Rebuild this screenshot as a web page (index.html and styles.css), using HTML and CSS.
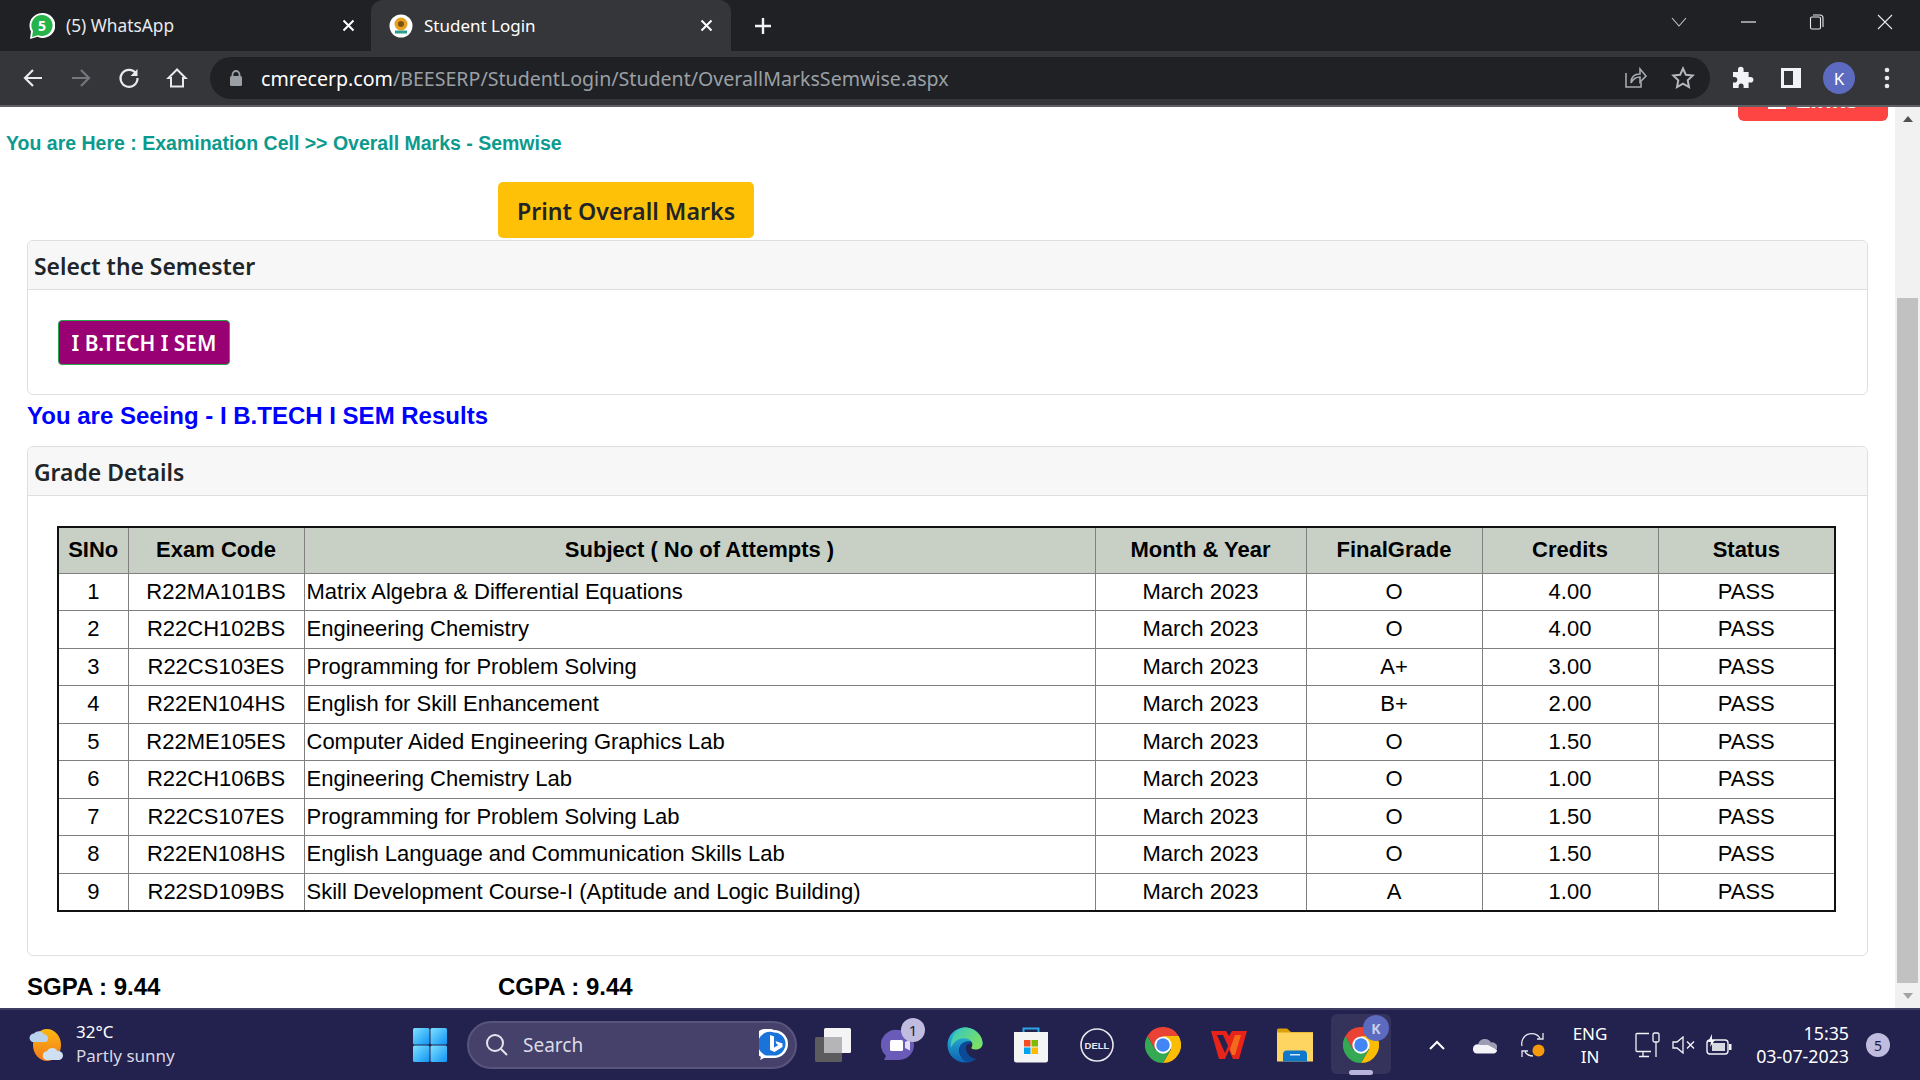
FILE: index.html
```html
<!DOCTYPE html>
<html>
<head>
    <title>Student Login</title>
    <link rel="stylesheet" href="styles.css">
</head>
<body>
    <svg class="defs" width="0" height="0">
        <defs>
            <symbol id="chrome" viewBox="0 0 48 48">
                <path fill="#ea4335" d="M3.2 12A24 24 0 0 1 44.8 12H24L13.6 30z"/>
                <path fill="#fbbc04" d="M44.8 12A24 24 0 0 1 24 48L34.4 30 24 12z"/>
                <path fill="#34a853" d="M3.2 12A24 24 0 0 0 24 48L34.4 30H13.6z"/>
                <circle cx="24" cy="24" r="11.5" fill="#fff"/>
                <circle cx="24" cy="24" r="9" fill="#4285f4"/>
            </symbol>
            <symbol id="close-x" viewBox="0 0 13 13">
                <path d="M1.500 1.500l10 10M11.500 1.500l-10 10" stroke="#fff" stroke-width="2"/>
            </symbol>
            <linearGradient id="edge-a" x1="0" y1="0" x2="0" y2="1">
                <stop offset="0" stop-color="#2cc4d8"/>
                <stop offset="1" stop-color="#0c62b4"/>
            </linearGradient>
            <linearGradient id="edge-b" x1="0" y1="0" x2="1" y2="0.6">
                <stop offset="0" stop-color="#31c5c9"/>
                <stop offset="1" stop-color="#7be064"/>
            </linearGradient>
            <linearGradient id="win-a" x1="0" y1="0" x2="1" y2="1">
                <stop offset="0" stop-color="#7fe0ff"/>
                <stop offset="1" stop-color="#0f94f5"/>
            </linearGradient>
            <linearGradient id="sun-a" x1="0" y1="0" x2="0" y2="1">
                <stop offset="0" stop-color="#fdb813"/>
                <stop offset="1" stop-color="#f0791a"/>
            </linearGradient>
        </defs>
    </svg>

    <div class="tabstrip">
        <div class="tab">
            <svg width="26" height="28" viewBox="0 0 26 28">
                <path fill="#fff" d="M13 1a12.500 12.500 0 0 0-11 18.500L1 27l7.500-2.200A12.500 12.500 0 1 0 13 1z"/>
                <path fill="#25b34a" d="M13 3a10.500 10.500 0 0 0-9 16L3 25l6-1.800A10.500 10.500 0 1 0 13 3z"/>
                <text class="wa-count" x="13" y="19" text-anchor="middle">5</text>
            </svg>
            <span class="tab-title tab-title-wa">(5) WhatsApp</span>
            <svg width="13" height="13"><use href="#close-x"/></svg>
        </div>
        <div class="tab tab-active">
            <svg width="24" height="24" viewBox="0 0 24 24">
                <circle cx="12" cy="12" r="11.500" fill="#fff"/>
                <circle cx="12" cy="10" r="6.500" fill="#e8a020"/>
                <circle cx="12" cy="10" r="3" fill="#7a5212"/>
                <path d="M6 18h12" stroke="#2a9d8f" stroke-width="3"/>
            </svg>
            <span class="tab-title">Student Login</span>
            <svg width="13" height="13"><use href="#close-x"/></svg>
        </div>
        <svg class="new-tab" width="20" height="20" viewBox="0 0 20 20">
            <path d="M10 2v16M2 10h16" stroke="#f1f3f4" stroke-width="2.400"/>
        </svg>
        <div class="window-controls">
            <svg class="win-chevron" width="18" height="12" viewBox="0 0 18 12"><path d="M2 2l7 8 7-8" fill="none" stroke="#c4c6ca" stroke-width="1.100"/></svg>
            <svg width="16" height="4" viewBox="0 0 16 4"><path d="M0 2h15" stroke="#e8eaed" stroke-width="1.200"/></svg>
            <svg width="16" height="16" viewBox="0 0 16 16"><rect x="1.500" y="3" width="10" height="12" rx="1.500" fill="none" stroke="#e8eaed" stroke-width="1.100"/><path d="M4 1h7a3 3 0 0 1 3 3v9" fill="none" stroke="#e8eaed" stroke-width="1.100"/></svg>
            <svg width="16" height="16" viewBox="0 0 16 16"><path d="M1 1l14 14M15 1L1 15" stroke="#e8eaed" stroke-width="1.100"/></svg>
        </div>
    </div>

    <div class="toolbar">
        <div class="nav-btn">
            <svg width="22" height="22" viewBox="0 0 22 22"><path d="M20 11H3M11 3l-8 8 8 8" fill="none" stroke="#e8eaed" stroke-width="2.200"/></svg>
        </div>
        <div class="nav-btn">
            <svg width="22" height="22" viewBox="0 0 22 22"><path d="M2 11h17M11 3l8 8-8 8" fill="none" stroke="#74777c" stroke-width="2.200"/></svg>
        </div>
        <div class="nav-btn">
            <svg width="22" height="22" viewBox="0 0 22 22"><path d="M18 6.500A8.500 8.500 0 1 0 19.500 11" fill="none" stroke="#e8eaed" stroke-width="2.200"/><path d="M19.500 2v7h-7z" fill="#e8eaed"/></svg>
        </div>
        <div class="nav-btn">
            <svg width="22" height="22" viewBox="0 0 22 22"><path d="M11 2.500L2.500 11H5v8.500h12V11h2.500z" fill="none" stroke="#e8eaed" stroke-width="2"/></svg>
        </div>
        <div class="omnibox">
            <svg class="lock" width="14" height="18" viewBox="0 0 14 18"><path d="M3.500 8V5.500a3.500 3.500 0 0 1 7 0V8" fill="none" stroke="#9aa0a6" stroke-width="1.800"/><rect x="1" y="7" width="12" height="10" rx="1.500" fill="#9aa0a6"/></svg>
            <span class="url"><span class="url-host">cmrecerp.com</span>/BEESERP/StudentLogin/Student/OverallMarksSemwise.aspx</span>
            <svg class="omni-share" width="24" height="24" viewBox="0 0 24 24"><path d="M3 8v14h15v-5" fill="none" stroke="#a6a9ad" stroke-width="1.600"/><path d="M8 18c0-6 3-9 9-9V4l6 7-6 6v-5c-4 0-7 2-9 6z" fill="none" stroke="#a6a9ad" stroke-width="1.600"/></svg>
            <svg class="omni-star" width="24" height="24" viewBox="0 0 24 24"><path d="M12 2.500l2.900 6.300 6.800.8-5 4.700 1.300 6.800-6-3.400-6 3.400 1.300-6.800-5-4.700 6.800-.8z" fill="none" stroke="#b4b7bb" stroke-width="2"/></svg>
        </div>
        <div class="nav-btn">
            <svg width="24" height="24" viewBox="2 0 24 24"><path fill="#f1f3f4" d="M9 3.500a2.800 2.800 0 0 1 5.600 0V6h5v5h2a2.800 2.800 0 0 1 0 5.600h-2V22h-5v-2a2.500 2.500 0 0 0-5 0v2H4v-5.400h1.500a2.800 2.800 0 0 0 0-5.600H4V6h5z"/></svg>
        </div>
        <div class="nav-btn">
            <svg width="22" height="22" viewBox="0 0 22 22"><rect x="1" y="1" width="20" height="20" fill="#f1f3f4"/><rect x="4" y="4" width="9" height="14" fill="#35363a"/></svg>
        </div>
        <div class="nav-btn">
            <span class="avatar">K</span>
        </div>
        <div class="nav-btn">
            <svg width="6" height="22" viewBox="0 0 6 22"><circle cx="3" cy="3" r="2.300" fill="#e8eaed"/><circle cx="3" cy="11" r="2.300" fill="#e8eaed"/><circle cx="3" cy="19" r="2.300" fill="#e8eaed"/></svg>
        </div>
    </div>

    <div class="viewport">
        <div class="page">
            <div class="top-row"><a class="links-btn"><span class="links-icon"></span>Links</a></div>
            <div class="breadcrumb">You are Here : Examination Cell &gt;&gt; Overall Marks - Semwise</div>
            <div class="print-row"><button class="print-btn">Print Overall Marks</button></div>

            <div class="card">
                <div class="card-header">Select the Semester</div>
                <div class="card-body card-body-sem">
                    <button class="sem-btn">I B.TECH I SEM</button>
                </div>
            </div>

            <h3 class="seeing">You are Seeing - I B.TECH I SEM Results</h3>

            <div class="card">
                <div class="card-header">Grade Details</div>
                <div class="card-body card-body-grades">
                    <table class="grades">
                        <colgroup>
                            <col class="c-sno"><col class="c-code"><col class="c-subject"><col class="c-month"><col class="c-grade"><col class="c-credits"><col class="c-status">
                        </colgroup>
                        <thead>
                            <tr><th>SINo</th><th>Exam Code</th><th>Subject ( No of Attempts )</th><th>Month &amp; Year</th><th>FinalGrade</th><th>Credits</th><th>Status</th></tr>
                        </thead>
                        <tbody>
                            <tr><td>1</td><td>R22MA101BS</td><td class="subject">Matrix Algebra &amp; Differential Equations</td><td>March 2023</td><td>O</td><td>4.00</td><td>PASS</td></tr>
                            <tr><td>2</td><td>R22CH102BS</td><td class="subject">Engineering Chemistry</td><td>March 2023</td><td>O</td><td>4.00</td><td>PASS</td></tr>
                            <tr><td>3</td><td>R22CS103ES</td><td class="subject">Programming for Problem Solving</td><td>March 2023</td><td>A+</td><td>3.00</td><td>PASS</td></tr>
                            <tr><td>4</td><td>R22EN104HS</td><td class="subject">English for Skill Enhancement</td><td>March 2023</td><td>B+</td><td>2.00</td><td>PASS</td></tr>
                            <tr><td>5</td><td>R22ME105ES</td><td class="subject">Computer Aided Engineering Graphics Lab</td><td>March 2023</td><td>O</td><td>1.50</td><td>PASS</td></tr>
                            <tr><td>6</td><td>R22CH106BS</td><td class="subject">Engineering Chemistry Lab</td><td>March 2023</td><td>O</td><td>1.00</td><td>PASS</td></tr>
                            <tr><td>7</td><td>R22CS107ES</td><td class="subject">Programming for Problem Solving Lab</td><td>March 2023</td><td>O</td><td>1.50</td><td>PASS</td></tr>
                            <tr><td>8</td><td>R22EN108HS</td><td class="subject">English Language and Communication Skills Lab</td><td>March 2023</td><td>O</td><td>1.50</td><td>PASS</td></tr>
                            <tr><td>9</td><td>R22SD109BS</td><td class="subject">Skill Development Course-I (Aptitude and Logic Building)</td><td>March 2023</td><td>A</td><td>1.00</td><td>PASS</td></tr>
                        </tbody>
                    </table>
                </div>
            </div>

            <div class="gpa-row">
                <span class="gpa gpa-s">SGPA : 9.44</span>
                <span class="gpa">CGPA : 9.44</span>
            </div>
        </div>

        <div class="scrollbar">
            <div class="sb-arrow"><span class="sb-up"></span></div>
            <div class="sb-thumb"></div>
            <div class="sb-arrow"><span class="sb-down"></span></div>
        </div>
    </div>

    <div class="taskbar">
        <div class="weather">
            <svg width="38" height="36" viewBox="0 0 38 36">
                <ellipse cx="20" cy="18" rx="14" ry="16" fill="url(#sun-a)"/>
                <path fill="#b9d3ee" d="M5 15a4.500 4.500 0 0 1 2-8.500 6 6 0 0 1 10 1 4 4 0 0 1 2 7.500z"/>
                <path fill="#cfe0f2" d="M19 33a4.500 4.500 0 0 1 1-8.800 6 6 0 0 1 10.500 0 4.500 4.500 0 0 1 2 8.800z"/>
            </svg>
            <div class="weather-text">
                <span>32°C</span>
                <span class="weather-sub">Partly sunny</span>
            </div>
        </div>

        <div class="slot">
            <svg width="36" height="36" viewBox="0 0 36 36">
                <rect x="1" y="1" width="16.500" height="16.500" rx="1.500" fill="url(#win-a)"/>
                <rect x="18.500" y="1" width="16.500" height="16.500" rx="1.500" fill="url(#win-a)"/>
                <rect x="1" y="18.500" width="16.500" height="16.500" rx="1.500" fill="url(#win-a)"/>
                <rect x="18.500" y="18.500" width="16.500" height="16.500" rx="1.500" fill="url(#win-a)"/>
            </svg>
        </div>

        <div class="searchbox">
            <svg width="24" height="24" viewBox="0 0 24 24"><circle cx="10" cy="10" r="8" fill="none" stroke="#e6e5ee" stroke-width="2"/><path d="M16 16l6 6" stroke="#e6e5ee" stroke-width="2"/></svg>
            <span class="search-text">Search</span>
            <svg class="bing" width="30" height="32" viewBox="0 0 30 32">
                <path fill="#fff" d="M15 1a14 14 0 0 1 0 28H5l-4 2 1-3a14 14 0 0 1 13-27z"/>
                <path fill="#1a73d8" d="M15 3.500a11.500 11.500 0 0 1 0 23H7a11.500 11.500 0 0 1 8-23z"/>
                <path fill="#fff" d="M11 6l4 1.500v11l4.500-2.500-2-1-1-3 7 2.500v3.500l-8 5-4.500-2z"/>
            </svg>
        </div>

        <div class="slot">
            <svg width="38" height="36" viewBox="0 0 38 36">
                <rect x="1" y="10" width="27" height="25" rx="1.500" fill="#5c5c5e"/>
                <rect x="10" y="1" width="27" height="25" rx="1.500" fill="#f4f4f6"/>
                <rect x="10" y="10" width="18" height="16" fill="#b5b5b7"/>
            </svg>
        </div>
        <div class="slot slot-badged">
            <svg width="36" height="36" viewBox="0 0 36 36">
                <path fill="#6a5bb8" d="M18 3a15 15 0 0 1 0 30H3l2-4A15 15 0 0 1 18 3z"/>
                <rect x="9" y="13" width="13" height="11" rx="1.500" fill="#fff"/>
                <path fill="#e4def5" d="M24 15l5-2.500v11L24 21z"/>
            </svg>
            <span class="count-badge">1</span>
        </div>
        <div class="slot">
            <svg width="36" height="36" viewBox="0 0 36 36">
                <path fill="url(#edge-a)" d="M18 .5C8 .5.500 8.500.500 18c0 10 8 17.500 17.500 17.500 4 0 7.500-1.200 10-3-8 2-16-2-16-9 0-4 3-7.500 7-8.500 5-1 11 0 17 2.500C35.500 8 28 .5 18 .5z"/>
                <path fill="url(#edge-b)" d="M18 .5C26 .5 36 7 35.500 17c-.2 4-3.500 5.500-7 5.500-3 0-4.500-1-4-2 1.500-2 1-5-1-7-3-3-9-3-13-.5C6 16 4.500 19 4 21 3 9 11 .5 18 .5z"/>
                <path fill="#0b4a96" d="M12.500 22.500c0-5 4-8 8-8 2 0 3.500 1 4 2.500-5-1-6.500 3-5 7 1.500 4.500 5 7 10 8-3 2-7 3-11 2.500-4-2-6-7-6-12z"/>
            </svg>
        </div>
        <div class="slot">
            <svg width="36" height="36" viewBox="0 0 36 36">
                <path d="M10.500 6V1.500h15V6" fill="none" stroke="#2aa6e8" stroke-width="2"/>
                <path fill="#f4f4f4" d="M1 5h34v28a2.500 2.500 0 0 1-2.500 2.500h-29A2.500 2.500 0 0 1 1 33z"/>
                <rect x="11" y="13" width="6.500" height="6.500" fill="#f25022"/>
                <rect x="18.500" y="13" width="6.500" height="6.500" fill="#7fba00"/>
                <rect x="11" y="20.500" width="6.500" height="6.500" fill="#00a4ef"/>
                <rect x="18.500" y="20.500" width="6.500" height="6.500" fill="#ffb900"/>
            </svg>
        </div>
        <div class="slot">
            <svg width="36" height="36" viewBox="0 0 36 36">
                <circle cx="18" cy="18" r="16" fill="none" stroke="#e8e8ee" stroke-width="1.600"/>
                <text class="dell" x="18" y="21.500" text-anchor="middle">DELL</text>
            </svg>
        </div>
        <div class="slot"><svg width="36" height="36"><use href="#chrome"/></svg></div>
        <div class="slot">
            <svg width="36" height="28" viewBox="0 0 36 28">
                <path fill="#e8241a" d="M0 0h15l3 5 3-5h15l-8 28h-6l-4-9-4 9H8z"/>
                <path fill="#23214d" d="M6 4h6l5 11-3 7z"/>
                <path fill="#f46a1c" d="M24 4h6l-6 20h-3l-2-6z"/>
            </svg>
        </div>
        <div class="slot">
            <svg width="36" height="34" viewBox="0 0 36 34">
                <path fill="#d9a00a" d="M0 2a1.500 1.500 0 0 1 1.500-1.500H10L14 4h22v6H0z"/>
                <rect y="4.500" width="36" height="29" fill="#ffd561"/>
                <path fill="#0f78c8" d="M6 33.500v-7a4 4 0 0 1 4-4h16a4 4 0 0 1 4 4v7z"/>
                <rect x="13" y="26" width="10" height="1.500" fill="#cfe8fb"/>
            </svg>
        </div>
        <div class="slot slot-active">
            <span class="active-tile"></span>
            <svg class="active-chrome" width="36" height="36"><use href="#chrome"/></svg>
            <span class="profile-badge">K</span>
            <span class="running"></span>
        </div>

        <div class="tray">
            <div class="tray-slot">
                <svg width="18" height="12" viewBox="0 0 18 12"><path d="M2 10l7-7 7 7" fill="none" stroke="#fff" stroke-width="2"/></svg>
            </div>
            <div class="tray-slot">
                <svg width="24" height="18" viewBox="0 0 24 18"><path fill="#9e9cb5" d="M5 9a7 7 0 0 1 13-2.500A5 5 0 0 1 24 13H6z"/><path fill="#f4f4f8" d="M0 13a4.500 4.500 0 0 1 7-4l8 0 9 5a3.500 3.500 0 0 1-3 3.500H4A4 4 0 0 1 0 13z"/></svg>
            </div>
            <div class="tray-slot">
                <svg width="26" height="26" viewBox="0 0 26 26">
                    <path d="M2 14a10 10 0 0 1 18-8M23 1v6h-6" fill="none" stroke="#e8e8f0" stroke-width="1.300"/>
                    <path d="M13 24a10 10 0 0 1-8-4M2 25v-6h6" fill="none" stroke="#e8e8f0" stroke-width="1.300"/>
                    <circle cx="18.500" cy="18.500" r="6" fill="#f59a0c"/>
                </svg>
            </div>
            <div class="lang">
                <span>ENG</span>
                <span>IN</span>
            </div>
            <div class="sys-icons">
                <svg width="26" height="26" viewBox="0 0 26 26">
                    <path d="M14 1.500H2a1 1 0 0 0-1 1v16a1 1 0 0 0 1 1h14M8 20v4M4 24.500h10" fill="none" stroke="#f4f4f8" stroke-width="1.300"/>
                    <rect x="18" y="1" width="6" height="9" rx="1.500" fill="none" stroke="#f4f4f8" stroke-width="1.300"/>
                    <path d="M21 10v15" stroke="#f4f4f8" stroke-width="1.300"/>
                </svg>
                <svg width="24" height="18" viewBox="0 0 24 18">
                    <path d="M1 6h4l6-5v16l-6-5H1z" fill="none" stroke="#f4f4f8" stroke-width="1.300"/>
                    <path d="M15 5.500l7 7M22 5.500l-7 7" stroke="#f4f4f8" stroke-width="1.400"/>
                </svg>
                <svg width="26" height="22" viewBox="0 0 26 22">
                    <rect x="1" y="6" width="21" height="14" rx="3" fill="none" stroke="#f4f4f8" stroke-width="1.400"/>
                    <rect x="6" y="9" width="13" height="8" fill="#d8d8e2"/>
                    <rect x="23" y="10" width="2.500" height="6" fill="#f4f4f8"/>
                    <path d="M6 0L2 8h3l-1 5 5-7H6z" fill="#f4f4f8"/>
                </svg>
            </div>
            <div class="clock">
                <span>15:35</span>
                <span>03-07-2023</span>
            </div>
            <span class="notify">5</span>
        </div>
    </div>
</body>
</html>
```

FILE: styles.css
```css
* {
    box-sizing: border-box;
}
html, body {
    margin: 0;
    padding: 0;
}
body {
    width: 1920px;
    height: 1080px;
    overflow: hidden;
    font-family: "Liberation Sans", Arial, sans-serif;
    background: #fff;
}
.defs {
    position: absolute;
}

/* browser chrome */
.tabstrip {
    height: 51px;
    background: #202124;
    display: flex;
    align-items: stretch;
    font-family: "Noto Sans", sans-serif;
}
.tab {
    width: 371px;
    padding: 0 16px 0 29px;
    display: flex;
    align-items: center;
    color: #e8eaed;
}
.tab-active {
    width: 360px;
    padding: 0 18px 0 18px;
    background: #35363a;
    border-radius: 12px 12px 0 0;
    color: #fff;
}
.tab-title {
    margin-left: 11px;
    flex: 1;
    font-size: 17px;
}
.tab-title-wa {
    font-size: 17.300px;
}
.wa-count {
    font: bold 14px "Noto Sans", sans-serif;
    fill: #fff;
}
.new-tab {
    align-self: center;
    margin-left: 22px;
}
.window-controls {
    margin-left: auto;
    display: flex;
    align-items: center;
    gap: 52px;
    padding: 0 27px 8px 0;
}
.win-chevron {
    margin-right: 1px;
}
.toolbar {
    height: 56px;
    background: #35363a;
    border-bottom: 2px solid #5f6065;
    padding: 7px 9px;
    display: flex;
    align-items: center;
}
.nav-btn {
    width: 48px;
    height: 40px;
    display: flex;
    align-items: center;
    justify-content: center;
    flex: none;
}
.omnibox {
    width: 1500px;
    height: 42px;
    margin: 0 9px 0 9px;
    padding: 0 15px 0 19px;
    background: #202124;
    border-radius: 21px;
    display: flex;
    align-items: center;
    flex: none;
}
.url {
    margin-left: 18px;
    flex: 1;
    font: 19.600px "Noto Sans", sans-serif;
    color: #9aa0a6;
}
.url-host {
    color: #fff;
}
.omni-star {
    margin-left: 24px;
}
.omni-share {
    margin-top: -2px;
}
.avatar {
    width: 32px;
    height: 32px;
    border-radius: 50%;
    background: #5c6bc0;
    color: #fff;
    font: 17px "Noto Sans", sans-serif;
    display: flex;
    align-items: center;
    justify-content: center;
}

/* page */
.viewport {
    height: 901px;
    display: flex;
    overflow: hidden;
}
.page {
    width: 1895px;
    flex: none;
    color: #212529;
}
.top-row {
    height: 14px;
    padding-right: 7px;
    display: flex;
    justify-content: flex-end;
    align-items: flex-end;
    overflow: hidden;
}
.links-btn {
    width: 150px;
    height: 50px;
    flex: none;
    padding-bottom: 9px;
    background: #ff4444;
    border-radius: 6px;
    color: #fff;
    font-weight: bold;
    font-size: 24px;
    line-height: 1;
    display: flex;
    align-items: flex-end;
    justify-content: center;
}
.links-icon {
    width: 18px;
    height: 22px;
    margin: 0 10px 3px 0;
    background: #fff;
}
.breadcrumb {
    height: 44px;
    line-height: 44px;
    padding-left: 6px;
    font-size: 19.500px;
    font-weight: bold;
    color: #0b9a8d;
}
.print-row {
    height: 75px;
    padding: 17px 0 0 498px;
}
.print-btn {
    width: 256px;
    height: 56px;
    padding: 2px 0 0 0;
    background: #ffc107;
    border: none;
    border-radius: 5px;
    color: #212529;
    font: 600 23.200px "Noto Sans", sans-serif;
}
.card {
    margin: 0 27px;
    border: 1px solid #dfdfdf;
    border-radius: 6px;
}
.card-header {
    height: 49px;
    padding-left: 6px;
    background: #f7f7f7;
    border-bottom: 1px solid #dfdfdf;
    border-radius: 6px 6px 0 0;
    font: 600 22.900px/51px "Noto Sans", sans-serif;
}
.card-body-sem {
    height: 104px;
    padding: 30px 0 0 30px;
}
.sem-btn {
    width: 172px;
    height: 45px;
    padding: 0;
    background: #990073;
    border: 1px solid #28a745;
    border-radius: 4px;
    color: #fff;
    font: 600 20.900px "Noto Sans", sans-serif;
}
.seeing {
    height: 51px;
    margin: 0 27px;
    font-size: 24px;
    line-height: 42px;
    font-weight: bold;
    color: #0000ff;
}
.card-body-grades {
    padding: 30px 33px 43px 29px;
}
.grades {
    width: 1777px;
    table-layout: fixed;
    border-collapse: collapse;
    border: 2px solid #111;
    color: #000;
    font-size: 22px;
}
.c-sno { width: 70px; }
.c-code { width: 176px; }
.c-subject { width: 791px; }
.c-month { width: 211px; }
.c-grade { width: 176px; }
.c-credits { width: 176px; }
.c-status { width: 177px; }
.grades th, .grades td {
    border: 1px solid #808080;
    padding: 0 2px;
    text-align: center;
}
.grades th {
    height: 46px;
    background: #c8d0c5;
    font-weight: bold;
}
.grades td {
    height: 37.500px;
}
.grades td.subject {
    text-align: left;
}
.gpa-row {
    height: 62px;
    padding-left: 27px;
    display: flex;
    align-items: center;
    font-size: 24px;
    font-weight: bold;
    color: #000;
}
.gpa-s {
    width: 471px;
}

/* scrollbar */
.scrollbar {
    width: 25px;
    flex: none;
    background: #f1f1f1;
    display: flex;
    flex-direction: column;
}
.sb-arrow {
    height: 25px;
    display: flex;
    align-items: center;
    justify-content: center;
}
.sb-up {
    border: 5.500px solid transparent;
    border-top: 0;
    border-bottom: 6px solid #505050;
}
.sb-down {
    border: 5.500px solid transparent;
    border-bottom: 0;
    border-top: 6px solid #a3a3a3;
}
.sb-thumb {
    height: 686px;
    margin: 166px 2px 0 2px;
    background: #c1c1c1;
}

/* taskbar */
.taskbar {
    height: 72px;
    background: #23214d;
    border-top: 2px solid #3e3c62;
    display: flex;
    align-items: center;
    font-family: "Noto Sans", sans-serif;
    color: #fff;
}
.weather {
    width: 397px;
    padding-left: 27px;
    display: flex;
    align-items: center;
    flex: none;
}
.weather-text {
    margin: 0 0 2px 11px;
    display: flex;
    flex-direction: column;
    font-size: 17px;
    line-height: 24px;
}
.weather-sub {
    color: #d8d8e4;
}
.slot {
    width: 66px;
    height: 70px;
    flex: none;
    display: flex;
    align-items: center;
    justify-content: center;
    position: relative;
}
.searchbox {
    width: 330px;
    height: 48px;
    margin: 0 3px 0 4px;
    padding: 0 6px 0 16px;
    background: #45416b;
    border: 2px solid #58557d;
    border-radius: 24px;
    display: flex;
    align-items: center;
    flex: none;
}
.search-text {
    margin-left: 14px;
    flex: 1;
    font-size: 19px;
    color: #dcdbe6;
}
.count-badge {
    position: absolute;
    top: 8px;
    right: 7px;
    width: 24px;
    height: 24px;
    border-radius: 50%;
    background: #c0bcdf;
    color: #1d1b3a;
    font-size: 15px;
    display: flex;
    align-items: center;
    justify-content: center;
}
.dell {
    font: bold 9.500px "Liberation Sans", sans-serif;
    fill: #e8e8ee;
}
.slot-active {
    margin-right: 19px;
}
.active-tile {
    position: absolute;
    top: 4px;
    left: 3px;
    width: 60px;
    height: 60px;
    border-radius: 6px;
    background: #35335b;
}
.active-chrome {
    position: relative;
}
.profile-badge {
    position: absolute;
    top: 5px;
    right: 5px;
    width: 26px;
    height: 26px;
    border-radius: 50%;
    background: #5c6bc0;
    color: #c9cde9;
    font-size: 14px;
    font-weight: bold;
    display: flex;
    align-items: center;
    justify-content: center;
}
.running {
    position: absolute;
    left: 21px;
    bottom: 5px;
    width: 24px;
    height: 5px;
    border-radius: 3px;
    background: #b9b4dc;
}
.tray {
    flex: 1;
    display: flex;
    align-items: center;
    padding-right: 30px;
}
.tray-slot {
    width: 48px;
    display: flex;
    align-items: center;
    justify-content: center;
    flex: none;
}
.lang {
    width: 66px;
    display: flex;
    flex-direction: column;
    align-items: center;
    font-size: 17px;
    line-height: 23px;
}
.sys-icons {
    margin-left: 12px;
    display: flex;
    align-items: center;
    gap: 10.500px;
}
.clock {
    margin-left: auto;
    display: flex;
    flex-direction: column;
    align-items: flex-end;
    font-size: 17.800px;
    line-height: 23px;
}
.notify {
    margin-left: 17px;
    width: 24px;
    height: 24px;
    border-radius: 50%;
    background: #c0bcdf;
    color: #1d1b3a;
    font-size: 14px;
    display: flex;
    align-items: center;
    justify-content: center;
}
```
